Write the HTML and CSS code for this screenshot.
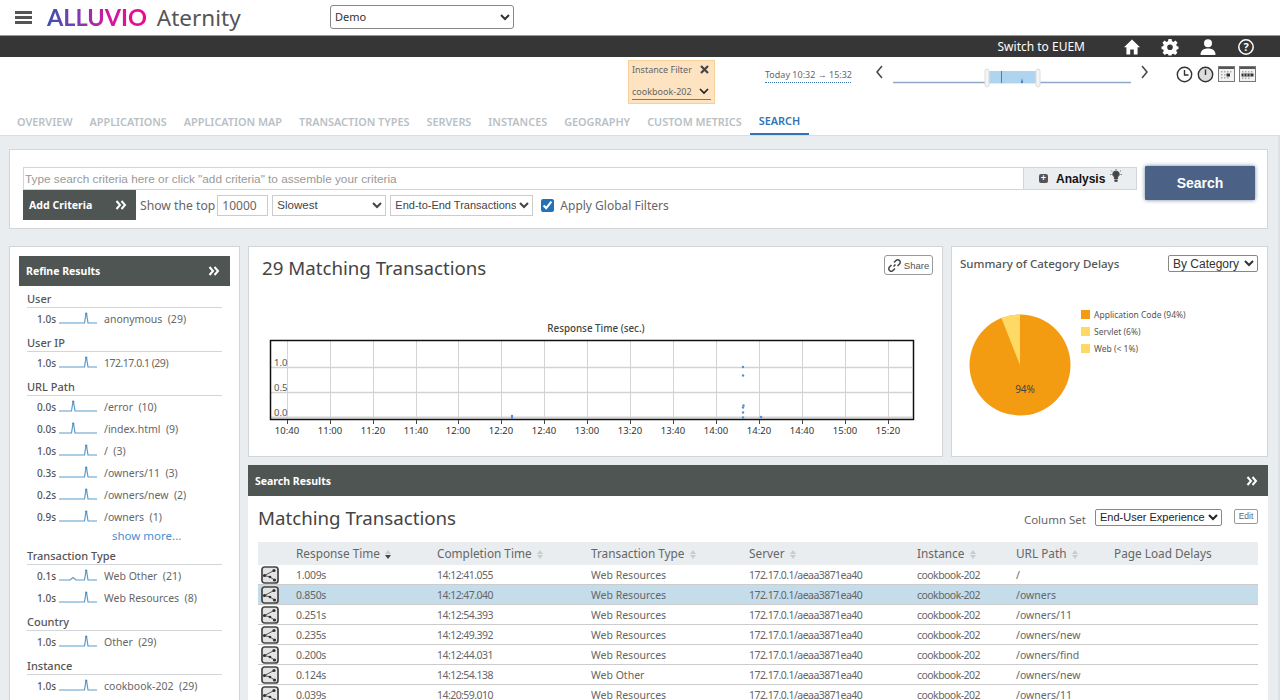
FILE: index.html
```html
<!DOCTYPE html>
<html lang="en">
<head>
    <meta charset="UTF-8">
    <title>Alluvio Aternity - Search</title>
    <link rel="stylesheet" href="styles.css">
</head>
<body>
    <svg class="defs" width="0" height="0">
        <symbol id="spark-right" viewBox="0 0 38 12">
            <path d="M0 11H25.500L27 1.500 27.500 1.500 29 11H38" fill="none" stroke="#5b9bc9" stroke-width="1.200"/>
            <circle cx="27.200" cy="1.500" r="1.100" fill="#4a8abb"/>
        </symbol>
        <symbol id="spark-left" viewBox="0 0 38 12">
            <path d="M0 11H12.500L14 1.500 14.500 1.500 16 11H38" fill="none" stroke="#5b9bc9" stroke-width="1.200"/>
            <circle cx="14.200" cy="1.500" r="1.100" fill="#4a8abb"/>
        </symbol>
        <symbol id="spark-bump" viewBox="0 0 38 12">
            <path d="M0 11H11L14 8.500 17 11H25.500L27 1.500 27.500 1.500 29 11H38" fill="none" stroke="#5b9bc9" stroke-width="1.200"/>
            <circle cx="27.200" cy="1.500" r="1.100" fill="#4a8abb"/>
        </symbol>
        <symbol id="trace" viewBox="0 0 18 18">
            <rect x="1" y="1" width="16" height="16" rx="2.500" fill="#e4e4e4" stroke="#444" stroke-width="1.700"/>
            <path d="M3.500 9.500L13 4.500M3.500 9.500L9 11M9 11L13.500 14" stroke="#555" stroke-width="1" fill="none"/>
            <circle cx="3.500" cy="9.500" r="1.600" fill="#333"/>
            <circle cx="13" cy="4.500" r="1.600" fill="#333"/>
            <circle cx="9" cy="11" r="1.300" fill="#333"/>
            <circle cx="13.500" cy="14" r="1.600" fill="#333"/>
        </symbol>
        <symbol id="chevrons" viewBox="0 0 12 10">
            <path d="M1.500 1L5 5 1.500 9M6.500 1L10 5 6.500 9" fill="none" stroke="currentColor" stroke-width="2"/>
        </symbol>
    </svg>

    <header class="topbar">
        <div class="burger"><span></span><span></span><span></span></div>
        <div class="logo"><span class="logo-mark">ALLUVIO</span> <span class="logo-name">Aternity</span></div>
        <select class="demo-select"><option>Demo</option></select>
    </header>

    <div class="blackbar">
        <span class="switch">Switch to EUEM</span>
        <svg class="bar-icon" viewBox="0 0 18 18"><path d="M9 1.500L17 9.200H14.600V16.500H10.800V11.500H7.200V16.500H3.400V9.200H1Z" fill="#fff"/></svg>
        <svg class="bar-icon" viewBox="0 0 18 18"><path d="M7.400 1H10.600L11 3.300 12.500 3.900 14.400 2.600 16.600 4.800 15.200 6.700 15.800 8.200 17.500 8.500V11L15.800 11.400 15.200 12.900 16.400 14.700 14.200 16.900 12.400 15.700 10.900 16.300 10.500 17.500H7.500L7.100 16.300 5.600 15.700 3.800 16.900 1.600 14.700 2.800 12.900 2.200 11.400.5 11V8.500L2.200 8.200 2.800 6.700 1.400 4.800 3.600 2.600 5.500 3.900 7 3.300ZM9 6.500A2.800 2.800 0 1 0 9 12.100 2.800 2.800 0 1 0 9 6.500Z" fill="#fff" fill-rule="evenodd"/></svg>
        <svg class="bar-icon" viewBox="0 0 18 18"><circle cx="9" cy="5.200" r="4" fill="#fff"/><path d="M1.500 17C1.500 12.500 4.500 10.500 9 10.500S16.500 12.500 16.500 17Z" fill="#fff"/></svg>
        <svg class="bar-icon" viewBox="0 0 18 18"><circle cx="9" cy="9" r="7.200" fill="none" stroke="#fff" stroke-width="1.500"/><text x="9" y="13" text-anchor="middle" class="help-mark">?</text></svg>
    </div>

    <div class="filterbar">
        <div class="instance-filter">
            <div class="filter-top"><span>Instance Filter</span>
                <svg width="9" height="9" viewBox="0 0 9 9"><path d="M1 1L8 8M8 1L1 8" stroke="#444" stroke-width="2.200"/></svg>
            </div>
            <div class="filter-value"><span>cookbook-202</span>
                <svg width="10" height="7" viewBox="0 0 10 7"><path d="M1 1L5 5 9 1" fill="none" stroke="#222" stroke-width="1.700"/></svg>
            </div>
        </div>
        <div class="time-range">Today 10:32 &#8594; 15:32</div>
        <svg class="timeline" width="286" height="30" viewBox="0 0 286 30">
            <path d="M7 2L2 8 7 14M267 2L272 8 267 14" fill="none" stroke="#444" stroke-width="1.500" transform="translate(0 5)"/>
            <path d="M18 23.500H256" stroke="#90a8c8" stroke-width="1.300"/>
            <rect x="112" y="12" width="50" height="12" fill="#aed4f0"/>
            <path d="M126.500 12V24" stroke="#4a80b0"/>
            <path d="M146 24L147 19 148 24Z" fill="#2f6ea5"/>
            <rect x="110" y="10" width="4" height="18" rx="2" fill="#f4f4f4" stroke="#ddd"/>
            <rect x="161" y="10" width="4" height="18" rx="2" fill="#f4f4f4" stroke="#ddd"/>
        </svg>
        <div class="view-icons">
            <svg width="17" height="17" viewBox="0 0 17 17"><circle cx="8.500" cy="8.500" r="7.200" fill="#fff" stroke="#333" stroke-width="1.400"/><path d="M8.500 4V9H12.500" fill="none" stroke="#333" stroke-width="1.400"/></svg>
            <svg width="17" height="17" viewBox="0 0 17 17"><circle cx="8.500" cy="8.500" r="7.200" fill="#ddd" stroke="#333" stroke-width="1.400"/><path d="M8.500 3.500V9" fill="none" stroke="#333" stroke-width="1.400"/></svg>
            <svg width="17" height="16" viewBox="0 0 17 16"><rect x=".5" y=".5" width="16" height="15" fill="#f2f2f2" stroke="#777"/><rect x="1" y="1" width="15" height="2" fill="#555"/><path d="M3 5h1.500v1.500H3zM6 5h1.500v1.500H6zM9 5h1.500v1.500H9zM12 5h1.500v1.500H12zM3 8h1.500v1.500H3zM6 8h1.500v1.500H6zM3 11h1.500v1.500H3zM6 11h1.500v1.500H6zM9 11h1.500v1.500H9z" fill="#aaa"/><path d="M8.500 7.500h3.500v3h-3.500z" fill="#333"/></svg>
            <svg width="17" height="16" viewBox="0 0 17 16"><rect x=".5" y=".5" width="16" height="15" fill="#f2f2f2" stroke="#777"/><rect x="1" y="1" width="15" height="2" fill="#555"/><path d="M3 5h1.500v1.500H3zM6 5h1.500v1.500H6zM9 5h1.500v1.500H9zM12 5h1.500v1.500H12zM3 11.500h1.500v1.500H3zM6 11.500h1.500v1.500H6zM9 11.500h1.500v1.500H9z" fill="#aaa"/><path d="M2.500 7.500h12v3h-12z" fill="#333"/><path d="M4.500 7.500h1v3h-1zM7.500 7.500h1v3h-1zM10.500 7.500h1v3h-1z" fill="#ccc"/></svg>
        </div>
    </div>

    <nav class="tabs">
        <a>OVERVIEW</a>
        <a>APPLICATIONS</a>
        <a>APPLICATION MAP</a>
        <a>TRANSACTION TYPES</a>
        <a>SERVERS</a>
        <a>INSTANCES</a>
        <a>GEOGRAPHY</a>
        <a>CUSTOM METRICS</a>
        <a class="active">SEARCH</a>
    </nav>

    <main class="main">
        <section class="search-panel">
            <div class="search-left">
                <div class="search-row">
                    <input class="search-input" type="text" placeholder="Type search criteria here or click &quot;add criteria&quot; to assemble your criteria">
                    <div class="analysis">
                        <span class="plus">+</span>
                        <b>Analysis</b>
                        <svg width="12" height="13" viewBox="0 0 12 13"><path d="M6 2A3.200 3.200 0 0 0 4.300 8V10H7.700V8A3.200 3.200 0 0 0 6 2ZM4.800 11H7.200V12.500H4.800ZM6 0V1.400M1 1.500L2.200 2.700M11 1.500L9.800 2.700M0 5.500H1.500M12 5.500H10.500" fill="#444" stroke="#444" stroke-width=".7"/></svg>
                    </div>
                </div>
                <div class="criteria-row">
                    <div class="add-criteria"><span>Add Criteria</span><svg width="12" height="10"><use href="#chevrons"/></svg></div>
                    <span class="show-top">Show the top</span>
                    <input class="top-count" type="text" value="10000">
                    <select class="opt-slow"><option>Slowest</option></select>
                    <select class="opt-type"><option>End-to-End Transactions</option></select>
                    <input class="global-check" type="checkbox" checked>
                    <span class="global-label">Apply Global Filters</span>
                </div>
            </div>
            <button class="search-btn">Search</button>
        </section>

        <div class="columns">
            <aside class="refine">
                <div class="dark-head refine-head"><span>Refine Results</span><svg width="12" height="10"><use href="#chevrons"/></svg></div>
                <div class="refine-body">
                    <h4>User</h4>
                    <div class="facet"><b>1.0s</b><svg><use href="#spark-right"/></svg><span>anonymous&nbsp; (29)</span></div>
                    <h4>User IP</h4>
                    <div class="facet"><b>1.0s</b><svg><use href="#spark-right"/></svg><span class="tight">172.17.0.1 (29)</span></div>
                    <h4>URL Path</h4>
                    <div class="facet"><b>0.0s</b><svg><use href="#spark-left"/></svg><span>/error&nbsp; (10)</span></div>
                    <div class="facet"><b>0.0s</b><svg><use href="#spark-left"/></svg><span>/index.html&nbsp; (9)</span></div>
                    <div class="facet"><b>1.0s</b><svg><use href="#spark-right"/></svg><span>/&nbsp; (3)</span></div>
                    <div class="facet"><b>0.3s</b><svg><use href="#spark-right"/></svg><span>/owners/11&nbsp; (3)</span></div>
                    <div class="facet"><b>0.2s</b><svg><use href="#spark-right"/></svg><span>/owners/new&nbsp; (2)</span></div>
                    <div class="facet"><b>0.9s</b><svg><use href="#spark-right"/></svg><span>/owners&nbsp; (1)</span></div>
                    <a class="show-more">show more...</a>
                    <h4>Transaction Type</h4>
                    <div class="facet"><b>0.1s</b><svg><use href="#spark-bump"/></svg><span>Web Other&nbsp; (21)</span></div>
                    <div class="facet"><b>1.0s</b><svg><use href="#spark-right"/></svg><span>Web Resources&nbsp; (8)</span></div>
                    <h4>Country</h4>
                    <div class="facet"><b>1.0s</b><svg><use href="#spark-right"/></svg><span>Other&nbsp; (29)</span></div>
                    <h4>Instance</h4>
                    <div class="facet"><b>1.0s</b><svg><use href="#spark-right"/></svg><span>cookbook-202&nbsp; (29)</span></div>
                </div>
            </aside>

            <div class="results">
                <div class="top-panels">
                    <section class="chart-panel">
                        <div class="chart-head">
                            <h2>29 Matching Transactions</h2>
                            <button class="share">
                                <svg width="13" height="13" viewBox="0 0 13 13"><path d="M5.500 7.500L7.500 5.500M6 3.500L8 1.500A2.200 2.200 0 0 1 11.500 5L9.500 7M7 9.500L5 11.500A2.200 2.200 0 0 1 1.500 8L3.500 6" fill="none" stroke="#444" stroke-width="1.500"/></svg>
                                Share
                            </button>
                        </div>
                        <svg class="chart" width="695" height="141" viewBox="248 316 695 141">
                            <text x="596" y="332" text-anchor="middle" class="chart-title">Response Time (sec.)</text>
                            <g stroke="#d4d4d4" stroke-width="1">
                                <path d="M287.500 341V419M330.500 341V419M373.500 341V419M416.500 341V419M458.500 341V419M501.500 341V419M544.500 341V419M587.500 341V419M630.500 341V419M673.500 341V419M716.500 341V419M759.500 341V419M802.500 341V419M845.500 341V419M888.500 341V419"/>
                                <path d="M271 367.500H912M271 392.500H912" stroke-width="1.500"/>
                                <path d="M271 417.500H912" stroke-width="2"/>
                            </g>
                            <rect x="270.500" y="340.500" width="643" height="79" fill="none" stroke="#111" stroke-width="1.500"/>
                            <path d="M287.500 420V424M330.500 420V424M373.500 420V424M416.500 420V424M458.500 420V424M501.500 420V424M544.500 420V424M587.500 420V424M630.500 420V424M673.500 420V424M716.500 420V424M759.500 420V424M802.500 420V424M845.500 420V424M888.500 420V424" stroke="#444"/>
                            <g class="axis-y">
                                <text x="274" y="366">1.0</text>
                                <text x="274" y="391">0.5</text>
                                <text x="274" y="416">0.0</text>
                            </g>
                            <g class="axis-x" text-anchor="middle">
                                <text x="287" y="434">10:40</text>
                                <text x="330" y="434">11:00</text>
                                <text x="373" y="434">11:20</text>
                                <text x="416" y="434">11:40</text>
                                <text x="458" y="434">12:00</text>
                                <text x="501" y="434">12:20</text>
                                <text x="544" y="434">12:40</text>
                                <text x="587" y="434">13:00</text>
                                <text x="630" y="434">13:20</text>
                                <text x="673" y="434">13:40</text>
                                <text x="716" y="434">14:00</text>
                                <text x="759" y="434">14:20</text>
                                <text x="802" y="434">14:40</text>
                                <text x="845" y="434">15:00</text>
                                <text x="888" y="434">15:20</text>
                            </g>
                            <g fill="#5b8dd9">
                                <circle cx="743" cy="367" r="1.200"/>
                                <circle cx="743" cy="375.500" r="1.200"/>
                                <circle cx="743.500" cy="405.500" r="1.200"/>
                                <circle cx="743" cy="407.500" r="1.200"/>
                                <circle cx="743" cy="412.500" r="1.200"/>
                                <circle cx="743" cy="417.500" r="1.200"/>
                                <circle cx="761" cy="417" r="1.300"/>
                                <circle cx="512" cy="416" r="1.200"/>
                                <circle cx="512" cy="418" r="1.200"/>
                            </g>
                        </svg>
                    </section>

                    <section class="summary-panel">
                        <div class="summary-head">
                            <h3>Summary of Category Delays</h3>
                            <select class="by-cat"><option>By Category</option></select>
                        </div>
                        <div class="summary-body">
                            <svg class="pie" width="102" height="102" viewBox="0 0 102 102">
                                <circle cx="51" cy="51" r="50.500" fill="#f39c12"/>
                                <path d="M51 51L32.400 4A50.500 50.500 0 0 1 51 .5Z" fill="#ffd966"/>
                                <text x="56" y="79" text-anchor="middle" class="pie-label">94%</text>
                            </svg>
                            <ul class="legend">
                                <li><i class="sw-app"></i>Application Code (94%)</li>
                                <li><i class="sw-other"></i>Servlet (6%)</li>
                                <li><i class="sw-other"></i>Web (&lt; 1%)</li>
                            </ul>
                        </div>
                    </section>
                </div>

                <div class="dark-head results-head"><span>Search Results</span><svg width="12" height="10"><use href="#chevrons"/></svg></div>
                <section class="results-body">
                    <div class="results-title">
                        <h2>Matching Transactions</h2>
                        <span class="col-set">Column Set</span>
                        <select class="col-select"><option>End-User Experience</option></select>
                        <button class="edit">Edit</button>
                    </div>
                    <table class="grid">
                        <colgroup>
                            <col class="c-icon"><col class="c-resp"><col class="c-comp"><col class="c-type">
                            <col class="c-server"><col class="c-inst"><col class="c-url"><col class="c-load">
                        </colgroup>
                        <thead>
                            <tr>
                                <th></th>
                                <th>Response Time <i class="sort down"></i></th>
                                <th>Completion Time <i class="sort"></i></th>
                                <th>Transaction Type <i class="sort"></i></th>
                                <th>Server <i class="sort"></i></th>
                                <th>Instance <i class="sort"></i></th>
                                <th>URL Path <i class="sort"></i></th>
                                <th>Page Load Delays</th>
                            </tr>
                        </thead>
                        <tbody>
                            <tr><td><svg class="trace"><use href="#trace"/></svg></td><td>1.009s</td><td>14:12:41.055</td><td>Web Resources</td><td>172.17.0.1/aeaa3871ea40</td><td>cookbook-202</td><td>/</td><td></td></tr>
                            <tr class="selected"><td><svg class="trace"><use href="#trace"/></svg></td><td>0.850s</td><td>14:12:47.040</td><td>Web Resources</td><td>172.17.0.1/aeaa3871ea40</td><td>cookbook-202</td><td>/owners</td><td></td></tr>
                            <tr><td><svg class="trace"><use href="#trace"/></svg></td><td>0.251s</td><td>14:12:54.393</td><td>Web Resources</td><td>172.17.0.1/aeaa3871ea40</td><td>cookbook-202</td><td>/owners/11</td><td></td></tr>
                            <tr><td><svg class="trace"><use href="#trace"/></svg></td><td>0.235s</td><td>14:12:49.392</td><td>Web Resources</td><td>172.17.0.1/aeaa3871ea40</td><td>cookbook-202</td><td>/owners/new</td><td></td></tr>
                            <tr><td><svg class="trace"><use href="#trace"/></svg></td><td>0.200s</td><td>14:12:44.031</td><td>Web Resources</td><td>172.17.0.1/aeaa3871ea40</td><td>cookbook-202</td><td>/owners/find</td><td></td></tr>
                            <tr><td><svg class="trace"><use href="#trace"/></svg></td><td>0.124s</td><td>14:12:54.138</td><td>Web Other</td><td>172.17.0.1/aeaa3871ea40</td><td>cookbook-202</td><td>/owners/new</td><td></td></tr>
                            <tr><td><svg class="trace"><use href="#trace"/></svg></td><td>0.039s</td><td>14:20:59.010</td><td>Web Resources</td><td>172.17.0.1/aeaa3871ea40</td><td>cookbook-202</td><td>/owners/11</td><td></td></tr>
                        </tbody>
                    </table>
                </section>
            </div>
        </div>
    </main>
</body>
</html>
```

FILE: styles.css
```css
html, body {
    height: 700px;
    overflow: hidden;
}
body {
    margin: 0;
    font-family: "Noto Sans", sans-serif;
    font-size: 11px;
    color: #666;
    background: #fff;
}
.defs {
    position: absolute;
}
h2, h3, h4, ul {
    margin: 0;
    padding: 0;
    font-weight: normal;
}

/* top header */
.topbar {
    height: 35px;
    display: flex;
    align-items: center;
    border-bottom: 1px solid #999;
    padding-left: 15px;
}
.burger {
    width: 17px;
    display: flex;
    flex-direction: column;
    gap: 2px;
    margin-right: 15px;
    margin-top: -1px;
}
.burger span {
    height: 3px;
    background: #555;
}
.logo {
    width: 283px;
    font-size: 22.500px;
    line-height: 30px;
    white-space: nowrap;
}
.logo-mark {
    font-family: "Lato", sans-serif;
    font-size: 23.500px;
    font-weight: 700;
    background: linear-gradient(90deg, #3f4fb0 0%, #7a3fb0 30%, #d0189c 60%, #ee0a8c 100%);
    -webkit-background-clip: text;
    background-clip: text;
    color: transparent;
}
.logo-name {
    color: #555;
    margin-left: 4px;
}
.demo-select {
    width: 184px;
    height: 24px;
    margin-top: -2px;
    font-family: "Noto Sans", sans-serif;
    font-size: 11px;
    color: #333;
    background: #fff;
    border: 1px solid #888;
    border-radius: 3px;
    padding-left: 0;
}
.blackbar {
    height: 21px;
    background: #363636;
    display: flex;
    align-items: center;
    justify-content: flex-end;
    gap: 20px;
    padding-right: 25px;
    color: #fff;
}
.switch {
    font-size: 12px;
    margin-right: 18px;
}
.bar-icon {
    width: 18px;
    height: 18px;
}
.help-mark {
    font-size: 11px;
    font-weight: 700;
    fill: #fff;
}

/* filter + timeline strip */
.filterbar {
    height: 48px;
    padding: 3px 0 0 628px;
    box-sizing: border-box;
    display: flex;
    align-items: flex-start;
}
.instance-filter {
    width: 87px;
    height: 44px;
    box-sizing: border-box;
    background: #fde3c0;
    border: 1px solid #f5cf9c;
    padding: 1px 3px 3px;
    font-size: 9px;
    color: #666;
}
.filter-top {
    display: flex;
    justify-content: space-between;
    align-items: center;
    height: 14px;
}
.filter-top svg {
    margin-right: 2px;
}
.filter-value {
    display: flex;
    justify-content: space-between;
    align-items: center;
    margin-top: 8px;
    height: 15px;
    border-bottom: 1px solid #777;
}
.filter-value svg {
    margin-right: 2px;
}
.time-range {
    margin: 8px 0 0 50px;
    width: 86px;
    height: 14px;
    font-size: 9px;
    line-height: 13px;
    white-space: nowrap;
    color: #666;
    border-bottom: 1px dotted #3a78b5;
}
.timeline {
    margin: -1px 0 0 24px;
}
.view-icons {
    display: flex;
    gap: 4px;
    margin: 6px 0 0 15px;
}

/* tabs */
.tabs {
    height: 31px;
    box-sizing: border-box;
    display: flex;
    align-items: flex-end;
    gap: 17px;
    padding-left: 17px;
    border-bottom: 1px solid #d9dee2;
}
.tabs a {
    font-size: 10.850px;
    font-weight: 600;
    line-height: 27px;
    color: #b9bfc5;
    white-space: nowrap;
}
.tabs a.active {
    color: #2f75b5;
    padding: 0 9px;
    margin-left: -9px;
    border-bottom: 2px solid #2f75b5;
    line-height: 25px;
}

/* main */
.main {
    background: #e9edf0;
    height: 564px;
    padding: 13px 10px 0 9px;
    box-sizing: border-box;
    border-right: 2px solid #dde1e4;
}
.search-panel {
    height: 80px;
    box-sizing: border-box;
    background: #fff;
    border: 1px solid #d2d6d9;
    padding: 17px 0 0 13px;
    display: flex;
    align-items: flex-start;
}
.search-left {
    width: 1114px;
}
.search-row {
    display: flex;
    height: 23px;
}
.search-input {
    flex: 1;
    box-sizing: border-box;
    height: 23px;
    border: 1px solid #d2d6d9;
    padding: 0 1px;
    font-family: "Liberation Sans", sans-serif;
    font-size: 11.800px;
    outline: none;
}
.search-input::placeholder {
    color: #999;
}
.analysis {
    width: 113px;
    box-sizing: border-box;
    height: 23px;
    background: #ebeef1;
    border: 1px solid #d2d6d9;
    border-left: 0;
    display: flex;
    align-items: center;
    padding-left: 15px;
    font-family: "Liberation Sans", sans-serif;
    font-size: 12px;
    color: #111;
}
.analysis svg {
    margin: -6px 0 0 5px;
}
.plus {
    width: 9px;
    height: 9px;
    border-radius: 2px;
    background: #555;
    color: #fff;
    font-size: 9px;
    font-weight: 700;
    line-height: 9px;
    text-align: center;
    margin-right: 8px;
}
.criteria-row {
    display: flex;
    align-items: center;
    height: 30px;
}
.add-criteria {
    width: 113px;
    height: 30px;
    box-sizing: border-box;
    background: #4f5553;
    color: #fff;
    display: flex;
    align-items: center;
    justify-content: space-between;
    padding: 0 9px 0 6px;
    font-size: 10.600px;
    font-weight: 700;
}
.show-top {
    font-size: 12.200px;
    margin-left: 4px;
    white-space: nowrap;
    color: #666;
}
.top-count {
    width: 51px;
    height: 21px;
    box-sizing: border-box;
    margin-left: 2px;
    border: 1px solid #ccc;
    padding: 0 4px;
    font-family: "Noto Sans", sans-serif;
    font-size: 12px;
    color: #666;
}
.opt-slow, .opt-type {
    height: 21px;
    margin-left: 4px;
    font-family: "Liberation Sans", sans-serif;
    font-size: 11.500px;
    color: #444;
    background: #fff;
    border: 1px solid #ccc;
}
.opt-slow {
    width: 114px;
}
.opt-type {
    width: 143px;
    font-size: 11px;
    padding: 0;
}
.global-check {
    width: 13px;
    height: 13px;
    margin: 0 0 0 8px;
    accent-color: #2272b8;
}
.global-label {
    margin-left: 6px;
    font-size: 12px;
    color: #666;
}
.search-btn {
    width: 110px;
    height: 34px;
    margin-left: 8px;
    margin-top: -1px;
    background: #4b6186;
    color: #fff;
    border: none;
    border-radius: 1px;
    box-shadow: 0 0 4px #6f83a8;
    font-family: "Liberation Sans", sans-serif;
    font-size: 14px;
    font-weight: 700;
}

/* columns */
.columns {
    display: flex;
    gap: 8px;
    margin-top: 17px;
}
.refine {
    width: 231px;
    height: 460px;
    box-sizing: border-box;
    background: #fff;
    border: 1px solid #d2d6d9;
    border-bottom: 0;
    padding: 9px;
}
.dark-head {
    background: #4f5553;
    color: #fff;
    display: flex;
    align-items: center;
    justify-content: space-between;
    font-size: 10.500px;
    font-weight: 700;
}
.refine-head {
    height: 30px;
    padding: 0 10px 0 7px;
}
.refine-body {
    padding: 0 8px 0 8px;
}
.refine-body h4 {
    height: 16px;
    padding-top: 5px;
    font-size: 11px;
    font-weight: 500;
    line-height: 16px;
    color: #555;
    border-bottom: 1px solid #d2d6d9;
}
.facet {
    height: 22px;
    display: flex;
    align-items: center;
    font-size: 10.500px;
    white-space: nowrap;
}
.facet b {
    width: 29px;
    text-align: right;
    font-weight: 500;
    font-size: 10px;
    color: #555;
}
.facet svg {
    width: 38px;
    height: 12px;
    margin: -3px 7px 0 3px;
}
.tight {
    letter-spacing: -.5px;
}
.show-more {
    display: block;
    height: 15px;
    margin-left: 85px;
    font-size: 11.500px;
    line-height: 15px;
    color: #4b8fcf;
}
.results {
    width: 1020px;
}
.top-panels {
    display: flex;
    gap: 8px;
}
.chart-panel {
    width: 695px;
    height: 211px;
    box-sizing: border-box;
    background: #fff;
    border: 1px solid #d2d6d9;
    position: relative;
}
.chart-head {
    height: 69px;
    display: flex;
    justify-content: space-between;
    padding: 8px 9px 0 13px;
    box-sizing: border-box;
}
.chart-head h2 {
    font-size: 18.700px;
    line-height: 26px;
    color: #444;
}
.share {
    width: 49px;
    height: 20px;
    display: flex;
    align-items: center;
    justify-content: center;
    gap: 3px;
    padding: 0;
    background: #fff;
    border: 1px solid #999;
    border-radius: 3px;
    font-family: "Liberation Sans", sans-serif;
    font-size: 9.500px;
    color: #555;
}
.chart {
    display: block;
    margin: 0 -1px;
}
.chart-title {
    font-size: 9.800px;
    font-weight: 500;
    fill: #444;
}
.axis-y text {
    font-size: 9.500px;
    fill: #555;
}
.axis-x text {
    font-size: 9.500px;
    fill: #333;
}
.summary-panel {
    width: 317px;
    height: 211px;
    box-sizing: border-box;
    background: #fff;
    border: 1px solid #d2d6d9;
}
.summary-head {
    display: flex;
    justify-content: space-between;
    align-items: center;
    padding: 8px 9px 0 8px;
    height: 17px;
}
.summary-head h3 {
    font-size: 11.500px;
    font-weight: 500;
    color: #555;
}
.by-cat {
    width: 90px;
    height: 17px;
    font-family: "Liberation Sans", sans-serif;
    font-size: 12px;
    color: #333;
    background: #fff;
    border: 1px solid #888;
    border-radius: 2px;
}
.summary-body {
    display: flex;
    padding: 34px 0 0 17px;
}
.pie {
    display: block;
    margin-top: 8px;
}
.pie-label {
    font-size: 10px;
    fill: #444;
}
.legend {
    list-style: none;
    margin: 0 0 0 10px;
    font-size: 8.500px;
    color: #555;
}
.legend li {
    display: flex;
    align-items: center;
    height: 17px;
    gap: 4px;
}
.legend i {
    width: 9px;
    height: 9px;
}
.sw-app {
    background: #f39c12;
}
.sw-other {
    background: #ffd966;
}

/* results */
.results-head {
    height: 31px;
    margin-top: 8px;
    padding: 0 10px 0 7px;
}
.results-body {
    height: 204px;
    background: #fff;
    padding: 0 10px;
    overflow: hidden;
}
.results-title {
    height: 46px;
    display: flex;
    align-items: center;
}
.results-title h2 {
    flex: 1;
    font-size: 18.700px;
    line-height: 26px;
    margin-top: -2px;
    color: #444;
}
.col-set {
    font-size: 11.500px;
    color: #666;
    margin-right: 9px;
}
.col-select {
    width: 127px;
    height: 17px;
    padding: 0;
    font-family: "Liberation Sans", sans-serif;
    font-size: 11px;
    color: #222;
    background: #fff;
    border: 1px solid #888;
    border-radius: 2px;
    margin-top: -4px;
}
.edit {
    width: 24px;
    height: 15px;
    padding: 0;
    margin: -6px 0 0 12px;
    background: #fff;
    border: 1px solid #999;
    border-radius: 2px;
    font-family: "Liberation Sans", sans-serif;
    font-size: 8.500px;
    color: #666;
}
.grid {
    width: 1000px;
    table-layout: fixed;
    border-collapse: collapse;
}
.c-icon { width: 38px; }
.c-resp { width: 141px; }
.c-comp { width: 154px; }
.c-type { width: 158px; }
.c-server { width: 168px; }
.c-inst { width: 99px; }
.c-url { width: 98px; }
.grid th {
    height: 22px;
    padding: 0 0 1px;
    background: #e9edf0;
    font-size: 11.800px;
    font-weight: normal;
    color: #666;
    text-align: left;
    white-space: nowrap;
}
.grid td {
    height: 19px;
    padding: 0;
    border-bottom: 1px solid #ccc;
    font-size: 10.500px;
    color: #666;
    white-space: nowrap;
}
.grid td:nth-child(2) {
    letter-spacing: -.3px;
}
.grid td:nth-child(3), .grid td:nth-child(5), .grid td:nth-child(6) {
    letter-spacing: -.55px;
}
.grid .selected td {
    background: #c5dceb;
}
.trace {
    display: block;
    width: 18px;
    height: 18px;
    margin-left: 3px;
}
.sort {
    display: inline-block;
    position: relative;
    width: 7px;
    height: 9px;
    margin-left: 2px;
    vertical-align: -1px;
}
.sort::before, .sort::after {
    content: "";
    position: absolute;
    left: 0;
    border-left: 3px solid transparent;
    border-right: 3px solid transparent;
}
.sort::before {
    top: 0;
    border-bottom: 4px solid #c8ccd0;
}
.sort::after {
    bottom: 0;
    border-top: 4px solid #c8ccd0;
}
.sort.down::after {
    border-top-color: #444;
}
```
